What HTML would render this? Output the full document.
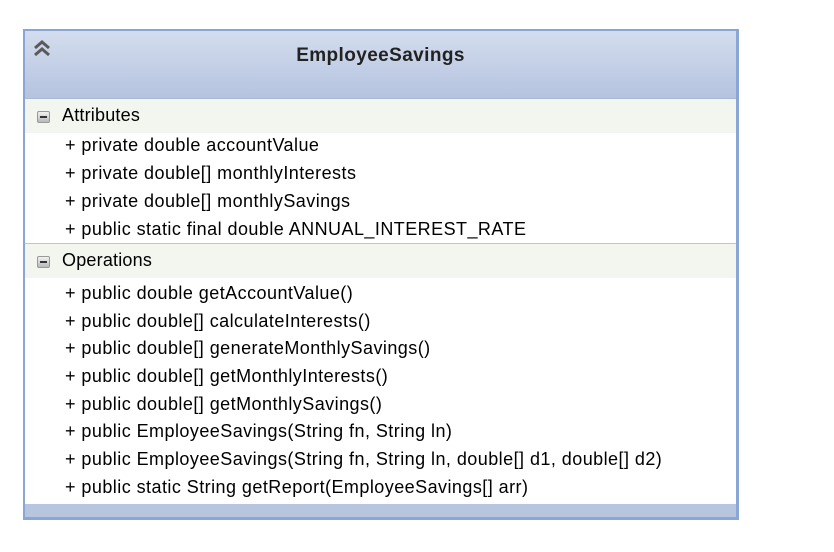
<!DOCTYPE html>
<html><head><meta charset="utf-8"><style>
body{margin:0;width:834px;height:552px;background:#fff;position:relative;overflow:hidden;font-family:"Liberation Sans","DejaVu Sans",sans-serif;color:#000}
.box{position:absolute;left:23px;top:29px;width:711px;height:486px;border:2px solid #8aa6d6;border-right-width:3px;border-bottom-width:3px;background:#fff}
.hdr{position:absolute;left:0;top:0;right:0;height:67px;background:linear-gradient(#d4ddee,#b5c3df);border-bottom:1px solid #a9b9d8}
.title{position:absolute;left:0;right:0;top:14px;text-align:center;font-weight:bold;font-size:19px;letter-spacing:0.4px;color:#222}
.sec{position:absolute;left:0;right:0;height:34px;background:#f3f6ef;font-size:18px;letter-spacing:0.2px}
.sec span{position:absolute;left:37px;top:6px}
.mini{position:absolute;left:12px;top:12px;width:11px;height:10px;background:linear-gradient(#f2f2f2,#b8b8b8);border:1px solid #999;border-radius:2px}
.mini:after{content:"";position:absolute;left:2px;right:2px;top:4px;height:2px;background:#333}
.ln{position:absolute;left:40px;font-size:18px;letter-spacing:0.45px;white-space:nowrap}
.sep{position:absolute;left:0;right:0;top:212px;height:1px;background:#b9c6dd}
.foot{position:absolute;left:0;right:0;bottom:0;height:13px;background:#b7c5df}
</style></head><body>
<div class="box">
<div class="hdr"><svg style="position:absolute;left:7px;top:8px" width="20" height="18" viewBox="0 0 20 18"><path d="M3 9 L10 3 L17 9 M3 16 L10 10 L17 16" fill="none" stroke="#5a5a5a" stroke-width="3" stroke-linejoin="miter"/></svg><div class="title">EmployeeSavings</div></div>
<div class="sec" style="top:68px"><div class="mini"></div><span>Attributes</span></div>
<div class="ln" style="top:104px">+ private double accountValue</div>
<div class="ln" style="top:132px">+ private double[] monthlyInterests</div>
<div class="ln" style="top:160px">+ private double[] monthlySavings</div>
<div class="ln" style="top:188px">+ public static final double ANNUAL_INTEREST_RATE</div>
<div class="sep"></div>
<div class="sec" style="top:213px"><div class="mini"></div><span>Operations</span></div>
<div class="ln" style="top:252px">+ public double getAccountValue()</div>
<div class="ln" style="top:280px">+ public double[] calculateInterests()</div>
<div class="ln" style="top:307px">+ public double[] generateMonthlySavings()</div>
<div class="ln" style="top:335px">+ public double[] getMonthlyInterests()</div>
<div class="ln" style="top:363px">+ public double[] getMonthlySavings()</div>
<div class="ln" style="top:390px">+ public EmployeeSavings(String fn, String ln)</div>
<div class="ln" style="top:418px">+ public EmployeeSavings(String fn, String ln, double[] d1, double[] d2)</div>
<div class="ln" style="top:446px">+ public static String getReport(EmployeeSavings[] arr)</div>
<div class="foot"></div>
</div>
</body></html>
